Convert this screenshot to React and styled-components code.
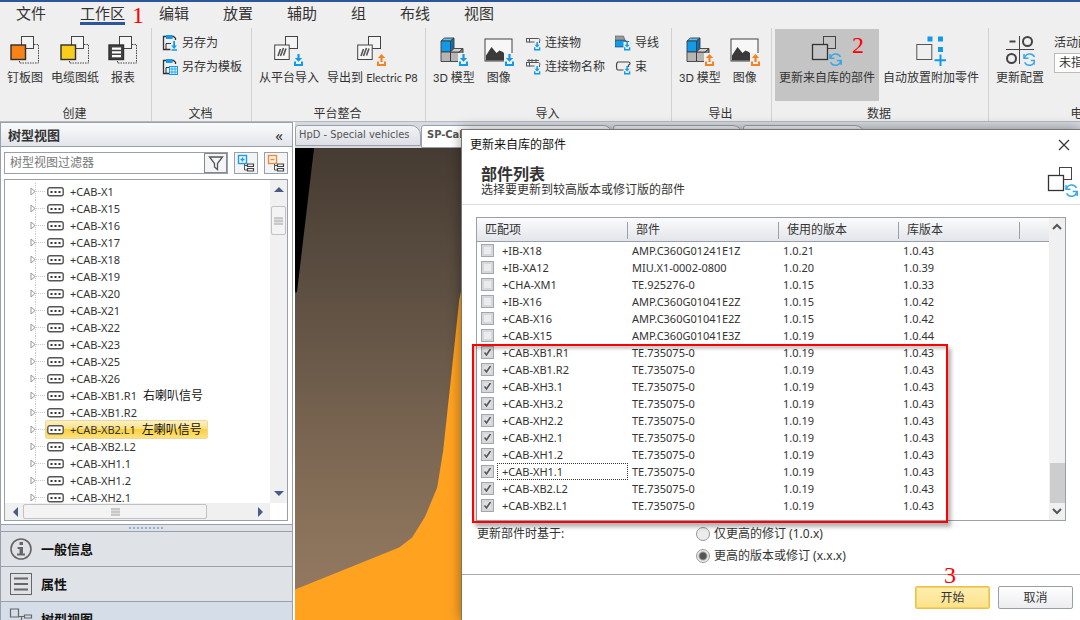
import { useState } from 'react'
import styled, { createGlobalStyle, css } from 'styled-components'

const colors = {
  text: '#333',
  blue: '#2b579a',
  sky: '#0f9bea',
  orange: '#f58220',
  line: '#9aa0ab',
  red: '#f00'
}

const treeItems = [
  ['+CAB-X1'], ['+CAB-X15'], ['+CAB-X16'], ['+CAB-X17'], ['+CAB-X18'], ['+CAB-X19'], ['+CAB-X20'],
  ['+CAB-X21'], ['+CAB-X22'], ['+CAB-X23'], ['+CAB-X25'], ['+CAB-X26'], ['+CAB-XB1.R1', '右喇叭信号'],
  ['+CAB-XB1.R2'], ['+CAB-XB2.L1', '左喇叭信号'], ['+CAB-XB2.L2'], ['+CAB-XH1.1'], ['+CAB-XH1.2'], ['+CAB-XH2.1']
]

const parts = [
  ['+IB-X18', 'AMP.C360G01241E1Z', '1.0.21', '1.0.43', false],
  ['+IB-XA12', 'MIU.X1-0002-0800', '1.0.20', '1.0.39', false],
  ['+CHA-XM1', 'TE.925276-0', '1.0.15', '1.0.33', false],
  ['+IB-X16', 'AMP.C360G01041E2Z', '1.0.15', '1.0.42', false],
  ['+CAB-X16', 'AMP.C360G01041E2Z', '1.0.15', '1.0.42', false],
  ['+CAB-X15', 'AMP.C360G01041E3Z', '1.0.19', '1.0.44', false],
  ['+CAB-XB1.R1', 'TE.735075-0', '1.0.19', '1.0.43', true],
  ['+CAB-XB1.R2', 'TE.735075-0', '1.0.19', '1.0.43', true],
  ['+CAB-XH3.1', 'TE.735075-0', '1.0.19', '1.0.43', true],
  ['+CAB-XH3.2', 'TE.735075-0', '1.0.19', '1.0.43', true],
  ['+CAB-XH2.2', 'TE.735075-0', '1.0.19', '1.0.43', true],
  ['+CAB-XH2.1', 'TE.735075-0', '1.0.19', '1.0.43', true],
  ['+CAB-XH1.2', 'TE.735075-0', '1.0.19', '1.0.43', true],
  ['+CAB-XH1.1', 'TE.735075-0', '1.0.19', '1.0.43', true],
  ['+CAB-XB2.L2', 'TE.735075-0', '1.0.19', '1.0.43', true],
  ['+CAB-XB2.L1', 'TE.735075-0', '1.0.19', '1.0.43', true]
]

/* ---------- icons ---------- */

const ArrowDown = ({ x = 0, y = 0, s = 1 }) => (
  <g transform={`translate(${x} ${y}) scale(${s})`} fill={colors.sky}>
    <path d='M3.4 0h2.2v4h2.6L4.5 7.8.8 4h2.600z' />
    <path d='M0 7.600h2v2.400h5V7.600h2V12H0z' />
  </g>
)

const ArrowUp = ({ x = 0, y = 0 }) => (
  <g transform={`translate(${x} ${y})`} fill={colors.orange}>
    <path d='M3.400 8h2.200V4h2.600L4.500 0 .8 4h2.600z' />
    <path d='M0 7.600h2v2.400h5V7.600h2V12H0z' />
  </g>
)

const Refresh = ({ x = 0, y = 0 }) => (
  <g transform={`translate(${x} ${y})`} fill='none' stroke='#35a7e6' strokeWidth='1.5'>
    <path d='M1.5 5.2A5.3 5.3 0 0 1 11.500 4' />
    <path d='M11.8 7.4A5.3 5.3 0 0 1 1.7 9.2' />
    <path d='M1 1v4.3h4.5' />
    <path d='M12.2 12V7.6H7.8' />
  </g>
)

const BoardIcon = ({ fill, lines }) => (
  <svg width='30' height='32' viewBox='0 0 30 32'>
    <rect x='11.5' y='1.5' width='12' height='12' fill='#f4f4f4' stroke='#444' />
    <path d='M24 9.5h4.5v18.5H9.5V25' fill='none' stroke='#444' strokeDasharray='1.5 1' />
    <rect x='1' y='10' width='14.5' height='14.5' fill={fill} stroke='#2e2e2e' strokeWidth='1.4' />
    {lines && <path d='M4 12.5h9v2.2H4zM4 16.2h9v2.2H4zM4 20h9v2.2H4z' fill='#fff' />}
  </svg>
)

const PlatformIcon = ({ up }) => (
  <svg width='30' height='32' viewBox='0 0 30 32'>
    <rect x='11.5' y='1.5' width='12' height='12' fill='#f4f4f4' stroke='#444' />
    <rect x='.7' y='10' width='14.5' height='14.5' fill='#f7f7f7' stroke='#444' />
    <path d='M4 21l2.5-7M6.5 21l3-8M9.5 20.5l2.5-7' stroke='#555' strokeWidth='1.6' />
    {up ? <ArrowUp x={20} y={19} /> : <ArrowDown x={20} y={19} />}
  </svg>
)

const CubesIcon = ({ up }) => (
  <svg width='30' height='32' viewBox='0 0 30 32' stroke='#3c3c3c' strokeWidth='.9'>
    <path d='M2 6l3.5-3H15l-3.5 3z' fill='#5fc0f3' />
    <path d='M2 6h9.5v11H2z' fill='#0f9bea' />
    <path d='M11.5 6L15 3v11l-3.500 3z' fill='#0a6fb0' />
    <path d='M2 17h9.5v9.5H2zM11.5 17H20v9.5h-8.500z' fill='#b5b5b5' />
    <path d='M11.5 17l3.5-3.5h9L20 17z' fill='#d0d0d0' />
    <path d='M20 17l4-3.5v9.5l-4 3.500z' fill='#808080' />
    <rect x='19' y='18' width='11' height='14' fill='#efefef' stroke='none' />
    <g stroke='none'>{up ? <ArrowUp x={20} y={19} /> : <ArrowDown x={20} y={19} />}</g>
  </svg>
)

const ImageIcon = ({ up }) => (
  <svg width='30' height='32' viewBox='0 0 30 32'>
    <rect x='1' y='4' width='27' height='22' fill='#f7f7f7' stroke='#444' />
    <path d='M2 25.5v-5L7.5 12l5 6 3-2.5 3.5 1.5 3 4 5 1v3.500z' fill='#3a3a3a' />
    <path d='M20 18h10v14H20z' fill='#efefef' />
    {up ? <ArrowUp x={21} y={19} /> : <ArrowDown x={21} y={19} />}
  </svg>
)

const UpdateIcon = ({ plain }) => (
  <svg width='32' height='32' viewBox='0 0 32 32'>
    <rect x='12.5' y='1.5' width='12' height='12' fill={plain ? '#fff' : 'none'} stroke='#444' />
    <rect x='1.5' y='9.5' width='15' height='15' fill={plain ? '#fff' : '#c4c4c4'} stroke='#333' strokeWidth='1.300' />
    <Refresh x={18} y={18} />
  </svg>
)

const PlaceIcon = () => (
  <svg width='30' height='32' viewBox='0 0 30 32'>
    <rect x='.8' y='9.5' width='15' height='15' fill='none' stroke='#555' />
    <path d='M11.5 1.5h5v5h-5zM22 1.5h5v5h-5zM22 12h5v5h-5z' fill={colors.sky} />
    <path d='M24.5 19.5V31M18.5 25.2h12' stroke={colors.sky} strokeWidth='2' />
  </svg>
)

const ConfigIcon = () => (
  <svg width='30' height='32' viewBox='0 0 30 32' fill='none' stroke='#444'>
    <path d='M14.5 1v28M1 14.5h28' />
    <path d='M4.5 6.5h6' strokeWidth='2' />
    <circle cx='22.5' cy='6.5' r='4.5' strokeWidth='2' />
    <circle cx='6.5' cy='23.5' r='4.5' strokeWidth='2' />
    <Refresh x={18} y={18} />
  </svg>
)

const SaveIcon = ({ template }) => (
  <svg width='16' height='16' viewBox='0 0 16 16'>
    <path d='M13.5 5V3.2L11.5 1.5H1.500v13h7' fill='none' stroke='#333' strokeWidth='1.3' />
    <path d='M4 0h6.5v4H4z' fill={colors.sky} />
    <path d='M4 14V8.5h5' fill='none' stroke='#333' />
    {template ? (
      <g>
        <rect x='7.5' y='7.5' width='8' height='8' fill='#e8f6fd' stroke={colors.sky} />
        <path d='M10 8v7M13 8v7M8 10h7M8 13h7' stroke={colors.sky} strokeWidth='.8' />
      </g>
    ) : <path d='M11.200 6h1.800v4.500h2L12.100 14 9.200 10.500h2zM9.500 14.200H15v1.500H9.500z' fill={colors.sky} />}
  </svg>
)

const LinkIcon = ({ name }) => (
  <svg width='15' height='16' viewBox='0 0 15 16'>
    <path d='M3 3.5h9.5a1.5 1.5 0 0 1 1 2.500V8M3 7h5.5' fill='none' stroke='#555' />
    <rect x='.5' y='3.5' width='3' height='3.5' fill='none' stroke='#555' />
    {name && <path d='M1 1.5h12M3 0v3M6 0v3M10 0v3' stroke='#555' />}
    <ArrowDown x={8} y={7} s={0.7} />
  </svg>
)

const WireIcon = () => (
  <svg width='16' height='16' viewBox='0 0 16 16'>
    <path d='M0 1h8.500l1.500 4H0z' fill='#999' stroke='#555' strokeWidth='.6' />
    <path d='M0 5.5h11V12H0z' fill={colors.sky} stroke='#235' strokeWidth='.6' />
    <path d='M11 6.5c3-.5 4 .5 4 2' fill='none' stroke='#555' />
    <path d='M8.5 7h7v9h-7z' fill='#efefef' />
    <ArrowDown x={9} y={7} s={0.7} />
  </svg>
)

const BundleIcon = () => (
  <svg width='16' height='16' viewBox='0 0 16 16'>
    <path d='M3 3h10.5a1.5 1.5 0 0 1 0 3v5H3c-2 0-2-8 0-8z' fill='none' stroke='#444' strokeWidth='1.2' />
    <path d='M8.500 8h7v8h-7z' fill='#efefef' />
    <ArrowDown x={9} y={7} s={0.7} />
  </svg>
)

const PlugIcon = () => (
  <svg width='17' height='10' viewBox='0 0 17 10'>
    <rect x='.8' y='.8' width='15.4' height='8' rx='2' fill='#fff' stroke='#555' strokeWidth='1.4' />
    <path d='M3.5 4h2v2h-2zM7.5 4h2v2h-2zM11.5 4h2v2h-2z' fill='#333' />
  </svg>
)

const TwistIcon = () => (
  <svg width='15' height='17' viewBox='0 0 15 17' fill='none'>
    <path d='M5.5 0v17M6 8.5h9' stroke='#c8c8c8' strokeDasharray='1 1' />
    <path d='M1 5l4 3.5L1 12z' fill='#fff' stroke='#999' />
  </svg>
)

const FunnelIcon = () => (
  <svg width='16' height='16' viewBox='0 0 16 16'>
    <path d='M1.5 2h13L9.500 8.500v6L6.500 12v-3.500z' fill='none' stroke='#555' strokeWidth='1.3' />
  </svg>
)

const ExpandIcon = ({ minus }) => {
  const tone = minus ? '#f58a32' : '#1b9fe3'
  return (
    <svg width='18' height='18' viewBox='0 0 18 18' fill='none'>
      <rect x='1.5' y='1.5' width='8' height='8' stroke={tone} strokeWidth='1.4' />
      <path d={minus ? 'M3.500 5.500h4' : 'M3.500 5.500h4M5.500 3.500v4'} stroke={tone} strokeWidth='1.4' />
      <path d='M7.5 10v6H10M7.500 11.500H10' stroke='#555' />
      <path d='M10.500 10h6v2.500h-6zM10.500 14.500h6V17h-6z' stroke='#444' strokeWidth='1.2' />
    </svg>
  )
}

const InfoIcon = () => (
  <svg width='24' height='24' viewBox='0 0 24 24'>
    <circle cx='12' cy='12' r='10' fill='none' stroke='#666' strokeWidth='1.6' />
    <path d='M10.5 5h3.500v3h-3.500zM8.500 10h5.500v6.500h2v2H8v-2h2.500V12h-2z' fill='#666' />
  </svg>
)

const ListIcon = () => (
  <svg width='24' height='24' viewBox='0 0 24 24' fill='none' stroke='#666'>
    <rect x='1.5' y='1.5' width='21' height='21' />
    <path d='M5 6.5h14M5 12h14M5 17.5h14' strokeWidth='2' />
  </svg>
)

const StructureIcon = () => (
  <svg width='24' height='24' viewBox='0 0 24 24' fill='none' stroke='#666' strokeWidth='1.2'>
    <path d='M1.5 2h8v8h-8zM15.5 8h7v3h-7zM15.5 15h7v3h-7zM10 9.5h5.5M12.5 9.5v7h3' />
  </svg>
)

const Chevron = ({ d, color = '#4a5a88', fill = true }) => (
  <svg width='10' height='10' viewBox='0 0 10 10'>
    <path d={d} fill={fill ? color : 'none'} stroke={fill ? 'none' : color} strokeWidth='2' />
  </svg>
)

/* ---------- parts ---------- */

const BigTool = ({ icon, label, active, children }) => (
  <ToolButton $active={active}>
    {icon}
    <span>{label}</span>
    {children}
  </ToolButton>
)

const SmallTool = ({ icon, label }) => <SmallButton>{icon}{label}</SmallButton>

const Ribbon = () => (
  <Header>
    <Menu>
      <MenuTab href='#file'>文件</MenuTab>
      <MenuTab href='#workspace' $active>工作区<Mark $left='52px' $top='1px'>1</Mark></MenuTab>
      <MenuTab href='#edit'>编辑</MenuTab>
      <MenuTab href='#place'>放置</MenuTab>
      <MenuTab href='#assist'>辅助</MenuTab>
      <MenuTab href='#group'>组</MenuTab>
      <MenuTab href='#routing'>布线</MenuTab>
      <MenuTab href='#view'>视图</MenuTab>
    </Menu>
    <Groups>
      <Group $width='152px'>
        <Tools>
          <BigTool icon={<BoardIcon fill='#f98316' />} label='钉板图' />
          <BigTool icon={<BoardIcon fill='#f8cd1c' />} label='电缆图纸' />
          <BigTool icon={<BoardIcon fill='#444' lines />} label='报表' />
        </Tools>
        <GroupTitle>创建</GroupTitle>
      </Group>
      <Group $width='100px'>
        <Tools>
          <SmallTools>
            <SmallTool icon={<SaveIcon />} label='另存为' />
            <SmallTool icon={<SaveIcon template />} label='另存为模板' />
          </SmallTools>
        </Tools>
        <GroupTitle>文档</GroupTitle>
      </Group>
      <Group $width='174px'>
        <Tools>
          <BigTool icon={<PlatformIcon />} label='从平台导入' />
          <BigTool icon={<PlatformIcon up />} label={<>导出到 <Latin>Electric P8</Latin></>} />
        </Tools>
        <GroupTitle>平台整合</GroupTitle>
      </Group>
      <Group $width='246px'>
        <Tools>
          <BigTool icon={<CubesIcon />} label={<><Latin>3D</Latin> 模型</>} />
          <BigTool icon={<ImageIcon />} label='图像' />
          <SmallTools>
            <SmallTool icon={<LinkIcon />} label='连接物' />
            <SmallTool icon={<LinkIcon name />} label='连接物名称' />
          </SmallTools>
          <SmallTools>
            <SmallTool icon={<WireIcon />} label='导线' />
            <SmallTool icon={<BundleIcon />} label='束' />
          </SmallTools>
        </Tools>
        <GroupTitle>导入</GroupTitle>
      </Group>
      <Group $width='100px'>
        <Tools>
          <BigTool icon={<CubesIcon up />} label={<><Latin>3D</Latin> 模型</>} />
          <BigTool icon={<ImageIcon up />} label='图像' />
        </Tools>
        <GroupTitle>导出</GroupTitle>
      </Group>
      <Group $width='217px'>
        <Tools>
          <BigTool icon={<UpdateIcon />} label='更新来自库的部件' active>
            <Mark $left='77px' $top='4px'>2</Mark>
          </BigTool>
          <BigTool icon={<PlaceIcon />} label='自动放置附加零件' />
        </Tools>
        <GroupTitle>数据</GroupTitle>
      </Group>
      <Group $width='190px'>
        <Tools>
          <BigTool icon={<ConfigIcon />} label='更新配置' />
          <Field>
            <label htmlFor='config'>活动配置</label>
            <ConfigSelect id='config'>
              <option>未指定</option>
            </ConfigSelect>
          </Field>
        </Tools>
        <GroupTitle>电气</GroupTitle>
      </Group>
    </Groups>
  </Header>
)

const Sidebar = () => {
  const [selected, setSelected] = useState(14)
  return (
    <Side>
      <SideTitle><h2>树型视图</h2><Collapse aria-label='collapse'>«</Collapse></SideTitle>
      <FilterRow>
        <FilterBox>
          <FilterInput aria-label='filter' placeholder='树型视图过滤器' />
          <FunnelButton aria-label='apply filter'><FunnelIcon /></FunnelButton>
        </FilterBox>
        <IconButton aria-label='expand all'><ExpandIcon /></IconButton>
        <IconButton aria-label='collapse all'><ExpandIcon minus /></IconButton>
      </FilterRow>
      <TreeBox>
        <TreeMain>
          <Tree>
            {treeItems.map(([name, note], i) => (
              <TreeRow key={name}>
                <TwistIcon />
                <TreeLabel $selected={i === selected} onClick={() => setSelected(i)}>
                  <PlugIcon />{name}{note && <Note>{note}</Note>}
                </TreeLabel>
              </TreeRow>
            ))}
          </Tree>
          <TreeScroll>
            <Chevron d='M0 8l5-5 5 5z' />
            <TreeThumb><Grip /></TreeThumb>
            <Chevron d='M0 2l5 5 5-5z' />
          </TreeScroll>
        </TreeMain>
        <TreeScrollX>
          <Chevron d='M8 0L3 5l5 5z' />
          <ThumbTrack><ThumbX><Grip /></ThumbX></ThumbTrack>
          <Chevron d='M2 0l5 5-5 5z' />
        </TreeScrollX>
      </TreeBox>
      <Splitter><Dots /></Splitter>
      <PanelButton><InfoIcon />一般信息</PanelButton>
      <PanelButton><ListIcon />属性</PanelButton>
      <PanelButton $current><StructureIcon />树型视图</PanelButton>
    </Side>
  )
}

const Workspace = () => (
  <Work>
    <Tabs>
      <DocTab $width='126px'>HpD - Special vehicles</DocTab>
      <DocTab $width='192px' $active>SP-Cabin</DocTab>
      <DocTab $width='130px' aria-label='document 3' />
      <DocTab $width='122px' aria-label='document 4' />
    </Tabs>
    <Scene viewBox='0 0 784 472' preserveAspectRatio='xMinYMin slice'>
      <defs>
        <linearGradient id='shade' x1='0' y1='0' x2='0' y2='1'>
          <stop offset='0' stopColor='#463b32' />
          <stop offset='.3' stopColor='#5d4f42' />
          <stop offset='.8' stopColor='#8a725a' />
          <stop offset='1' stopColor='#967b62' />
        </linearGradient>
      </defs>
      <rect width='784' height='472' fill='url(#shade)' />
      <path d='M0 0h19L2 144H0z' fill='#000' />
      <path d='M166 142l-2 10-6 57-10 93-6 37-12 29-13 21-13 10L0 441v31h784V142z' fill='#ffa220' />
    </Scene>
  </Work>
)

const UpdateDialog = () => {
  const [checked, setChecked] = useState(parts.map(part => part[4]))
  const [basis, setBasis] = useState('version')
  const toggle = i => setChecked(checked.map((value, n) => (n === i ? !value : value)))
  return (
    <Dialog role='dialog' aria-label='更新来自库的部件'>
      <TitleBar>
        更新来自库的部件
        <Close aria-label='close'>
          <svg width='12' height='12' viewBox='0 0 12 12'><path d='M1 1l10 10M11 1L1 11' stroke='#333' strokeWidth='1.2' /></svg>
        </Close>
      </TitleBar>
      <Intro>
        <div>
          <h1>部件列表</h1>
          <p>选择要更新到较高版本或修订版的部件</p>
        </div>
        <UpdateIcon plain />
      </Intro>
      <ListBox>
        <Table>
          <colgroup>
            <Col $width='151px' /><Col $width='151px' /><Col $width='120px' /><Col $width='121px' /><col />
          </colgroup>
          <thead>
            <tr><Th>匹配项</Th><Th>部件</Th><Th>使用的版本</Th><Th>库版本</Th><Th /></tr>
          </thead>
          <tbody>
            {parts.map(([name, part, used, library], i) => (
              <tr key={name}>
                <Td>
                  <PartLabel>
                    <Check type='checkbox' checked={checked[i]} onChange={() => toggle(i)} />
                    <PartName $focused={i === 13}>{name}</PartName>
                  </PartLabel>
                </Td>
                <Td>{part}</Td>
                <Td>{used}</Td>
                <Td>{library}</Td>
                <Td />
              </tr>
            ))}
          </tbody>
        </Table>
        <ListScroll>
          <Chevron d='M1 7l4-4 4 4' color='#555' fill={false} />
          <ListThumb />
          <Chevron d='M1 3l4 4 4-4' color='#555' fill={false} />
        </ListScroll>
        <Highlight />
      </ListBox>
      <Options>
        <span>更新部件时基于:</span>
        <Choices>
          <Choice>
            <Radio type='radio' name='basis' checked={basis === 'revision'} onChange={() => setBasis('revision')} />
            仅更高的修订 (1.0.x)
          </Choice>
          <Choice>
            <Radio type='radio' name='basis' checked={basis === 'version'} onChange={() => setBasis('version')} />
            更高的版本或修订 (x.x.x)
          </Choice>
        </Choices>
      </Options>
      <Footer>
        <Action $primary>开始<Mark $left='28px' $top='-24px'>3</Mark></Action>
        <Action>取消</Action>
      </Footer>
    </Dialog>
  )
}

const App = () => (
  <Page>
    <GlobalStyle />
    <Ribbon />
    <Body>
      <Sidebar />
      <Workspace />
      <UpdateDialog />
    </Body>
  </Page>
)

/* ---------- styles ---------- */

const GlobalStyle = createGlobalStyle`
* { box-sizing: border-box; }
body {
  margin: 0;
  overflow: hidden;
  color: ${colors.text};
  font: 12px/16px "Noto Sans", "Noto Sans CJK SC", sans-serif;
}
h1, h2, p, ul { margin: 0; padding: 0; }
button, input, select { font: inherit; color: inherit; }
button { cursor: pointer; }
svg { display: block; flex: none; }
`

const headerShade = css`
background: linear-gradient(#fbfbfc, #e2e5ea);
`

const Page = styled.div`
display: flex;
flex-direction: column;
height: 100vh;
background: #efefef;
`

const Header = styled.header`
border-top: 2px solid ${colors.blue};
border-bottom: 1px solid #b5b9c2;
background: #efefef;
overflow: hidden;
`

const Menu = styled.nav`
display: flex;
gap: 34px;
padding: 0 16px;
height: 26px;
`

const MenuTab = styled.a`
position: relative;
height: 23px;
font-size: 15px;
line-height: 23px;
color: ${colors.text};
text-decoration: none;
border-bottom: ${({ $active }) => ($active ? `3px solid ${colors.blue}` : 'none')};
`

const Mark = styled.span`
position: absolute;
left: ${({ $left }) => $left};
top: ${({ $top }) => $top};
font: 24px/24px "Liberation Serif", serif;
color: ${colors.red};
`

const Latin = styled.span`
font-family: Lato, sans-serif;
font-size: 11px;
`

const Groups = styled.div`
display: flex;
height: 93px;
`

const Group = styled.section`
display: flex;
flex-direction: column;
justify-content: space-between;
flex: none;
width: ${({ $width }) => $width};
padding: 1px 0 0 3px;
border-right: 1px solid #d2d2d2;
`

const Tools = styled.div`
display: flex;
`

const ToolButton = styled.button`
position: relative;
display: flex;
flex-direction: column;
align-items: center;
gap: 3px;
min-width: 40px;
height: 72px;
padding: 6px 4px 0;
border: 0;
white-space: nowrap;
background: ${({ $active }) => ($active ? '#c4c4c4' : 'transparent')};
`

const SmallTools = styled.div`
display: flex;
flex-direction: column;
padding: 2px 3px 0 7px;
`

const SmallButton = styled.button`
display: flex;
align-items: center;
gap: 4px;
height: 24px;
padding: 0;
border: 0;
white-space: nowrap;
background: transparent;
`

const GroupTitle = styled.div`
padding-right: 5px;
line-height: 14px;
text-align: center;
`

const Field = styled.div`
display: flex;
flex-direction: column;
gap: 2px;
padding: 6px 0 0 6px;
`

const ConfigSelect = styled.select`
appearance: none;
width: 100px;
height: 20px;
padding: 0 4px;
border: 1px solid #bbb;
background: #fff;
`

const Body = styled.main`
position: relative;
display: flex;
flex: 1;
min-height: 0;
`

const Side = styled.aside`
display: flex;
flex-direction: column;
flex: none;
width: 293px;
border: 1px solid ${colors.line};
border-bottom: 0;
background: #fff;
overflow: hidden;
`

const SideTitle = styled.div`
display: flex;
align-items: center;
justify-content: space-between;
flex: none;
height: 24px;
padding: 0 9px 0 7px;
border-bottom: 1px solid ${colors.line};
${headerShade}
h2 {
  font-size: 13px;
}
`

const Collapse = styled.button`
padding: 0;
border: 0;
font-size: 15px;
background: transparent;
`

const FilterRow = styled.div`
display: flex;
gap: 6px;
flex: none;
padding: 5px 4px 4px 3px;
`

const FilterBox = styled.div`
display: flex;
flex: 1;
min-width: 0;
height: 22px;
border: 1px solid ${colors.line};
`

const FilterInput = styled.input`
flex: 1;
min-width: 0;
padding: 0 5px;
border: 0;
outline: 0;
&::placeholder {
  color: #777;
}
`

const FunnelButton = styled.button`
display: grid;
place-items: center;
width: 23px;
padding: 0;
border: 1px solid #888;
background: #f3f4f6;
`

const IconButton = styled.button`
display: grid;
place-items: center;
width: 24px;
height: 22px;
padding: 0;
border: 1px solid ${colors.line};
background: #f3f4f6;
`

const TreeBox = styled.div`
display: flex;
flex-direction: column;
flex: none;
height: 342px;
margin: 1px 4px 0 3px;
border: 1px solid ${colors.line};
`

const TreeMain = styled.div`
display: flex;
flex: 1;
min-height: 0;
overflow: hidden;
`

const Tree = styled.ul`
flex: 1;
min-width: 0;
padding: 3px 0 0 25px;
list-style: none;
`

const TreeRow = styled.li`
display: flex;
align-items: center;
height: 17px;
font-size: 11px;
`

const TreeLabel = styled.button`
display: flex;
align-items: center;
gap: 6px;
height: 19px;
padding: 0 5px 0 1px;
border: 1px solid ${({ $selected }) => ($selected ? '#ecd9a0' : 'transparent')};
border-radius: 2px;
white-space: nowrap;
background: ${({ $selected }) => ($selected ? 'linear-gradient(#fdf0bd, #fbe28a 45%, #fccf3a 50%, #fde27c)' : 'transparent')};
`

const Note = styled.span`
font-size: 12px;
color: #111;
`

const TreeScroll = styled.div`
display: flex;
flex-direction: column;
align-items: center;
width: 17px;
padding: 4px 0;
background: #f0f0f1;
svg:last-child {
  margin-top: auto;
}
`

const TreeThumb = styled.div`
display: grid;
place-items: center;
width: 15px;
height: 29px;
margin-top: 12px;
border: 1px solid #bfc1c6;
border-radius: 2px;
background: #f3f3f4;
`

const Grip = styled.span`
width: 9px;
height: 8px;
background: repeating-linear-gradient(#c8c8c8 0 2px, #ddd 2px 3px);
`

const TreeScrollX = styled.div`
display: flex;
align-items: center;
flex: none;
height: 17px;
margin-right: 17px;
padding: 0 4px 0 5px;
background: #f0f0f1;
`

const ThumbTrack = styled.div`
flex: 1;
padding: 0 3px;
`

const ThumbX = styled.div`
display: grid;
place-items: center;
width: 80%;
height: 15px;
border: 1px solid #bfc1c6;
border-radius: 2px;
background: #f3f3f4;
`

const Splitter = styled.div`
display: grid;
place-items: center;
flex: none;
height: 8px;
margin-top: 3px;
border-top: 1px solid ${colors.line};
border-bottom: 1px solid ${colors.line};
background: #dfe3e8;
`

const Dots = styled.span`
width: 36px;
height: 2px;
background: repeating-linear-gradient(90deg, #8db2dc 0 2px, transparent 2px 4px);
`

const PanelButton = styled.button`
display: flex;
align-items: center;
gap: 8px;
flex: none;
height: 35px;
padding: 0 8px;
border: 0;
border-bottom: 1px solid ${colors.line};
font-size: 13px;
font-weight: bold;
color: #111;
background: ${({ $current }) => ($current ? '#d5dde8' : '#dfe2e7')};
`

const Work = styled.section`
display: flex;
flex-direction: column;
flex: 1;
min-width: 0;
padding-left: 2px;
background: #fff;
`

const Tabs = styled.div`
display: flex;
flex: none;
height: 26px;
padding-top: 3px;
background: #d6dae0;
`

const DocTab = styled.button`
flex: none;
width: ${({ $width }) => $width};
height: ${({ $active }) => ($active ? '23px' : '21px')};
padding: ${({ $active }) => ($active ? '0 5px 4px' : '0 3px 2px')};
border: 1px solid ${colors.line};
border-radius: 3px 10px 0 0;
font: ${({ $active }) => ($active ? 'bold' : 'normal')} 11px/16px "DejaVu Sans Condensed", "DejaVu Sans", sans-serif;
text-align: left;
color: #555;
background: ${({ $active }) => ($active ? '#fff' : 'linear-gradient(#f2f3f5, #dcdfe4)')};
`

const Scene = styled.svg`
flex: 1;
width: 100%;
min-height: 0;
`

const Dialog = styled.div`
position: absolute;
top: 7px;
right: 0;
bottom: 0;
left: 461px;
display: flex;
flex-direction: column;
border-top: 1px solid #777;
border-left: 1px solid #777;
background: #fff;
box-shadow: 0 0 12px rgba(0, 0, 0, 0.4);
`

const TitleBar = styled.div`
display: flex;
align-items: center;
justify-content: space-between;
height: 30px;
padding: 0 10px 0 8px;
color: #111;
`

const Close = styled.button`
padding: 0;
border: 0;
background: transparent;
`

const Intro = styled.div`
display: flex;
justify-content: space-between;
height: 45px;
padding: 6px 1px 0 19px;
border-bottom: 1px solid #ddd;
h1 {
  font-size: 16px;
  line-height: 16px;
}
`

const ListBox = styled.div`
position: relative;
display: flex;
height: 305px;
margin: 12px 14px 0;
border: 1px solid ${colors.line};
`

const Table = styled.table`
flex: 1;
align-self: flex-start;
table-layout: fixed;
border-collapse: collapse;
`

const Col = styled.col`
width: ${({ $width }) => $width};
`

const Th = styled.th`
height: 24px;
padding: 0 8px;
border-bottom: 1px solid ${colors.line};
font-weight: normal;
text-align: left;
background: linear-gradient(90deg, transparent calc(100% - 1px), #9aa0ab 0) 0 4px / 100% 17px no-repeat, linear-gradient(#fbfbfc, #e2e5ea);
&:last-child {
  ${headerShade}
}
`

const Td = styled.td`
height: 17px;
padding: 0 0 0 4px;
font-size: 11px;
line-height: 17px;
`

const PartLabel = styled.label`
display: flex;
align-items: center;
gap: 3px;
height: 17px;
`

const Check = styled.input`
appearance: none;
flex: none;
width: 13px;
height: 13px;
margin: 0;
border: 1px solid #a3a6aa;
background: #ececee;
box-shadow: inset 0 0 0 2px #d5d7da;
&:checked {
  background: #dfe1e4 url("data:image/svg+xml,%3Csvg xmlns='http://www.w3.org/2000/svg' viewBox='0 0 11 11'%3E%3Cpath d='M2.5 5.5l2 2.5 4-6' fill='none' stroke='%23555' stroke-width='1.6'/%3E%3C/svg%3E");
}
`

const PartName = styled.span`
flex: 1;
padding-left: 4px;
border: 1px dotted ${({ $focused }) => ($focused ? '#333' : 'transparent')};
line-height: 15px;
`

const ListScroll = styled.div`
display: flex;
flex-direction: column;
align-items: center;
width: 16px;
padding: 4px 0;
background: #f0f0f0;
`

const ListThumb = styled.div`
width: 15px;
height: 40px;
margin: auto 0 3px;
background: #cdcdcd;
`

const Highlight = styled.div`
position: absolute;
top: 126px;
left: -5px;
width: 476px;
height: 179px;
border: 2px solid ${colors.red};
box-shadow: 3px 4px 4px rgba(0, 0, 0, 0.3), inset 2px 3px 3px rgba(0, 0, 0, 0.2);
pointer-events: none;
`

const Options = styled.div`
display: flex;
padding: 5px 15px 10px;
border-bottom: 1px solid #aaa;
> span {
  width: 219px;
}
`

const Choices = styled.div`
display: flex;
flex-direction: column;
gap: 6px;
`

const Choice = styled.label`
display: flex;
align-items: center;
gap: 4px;
height: 16px;
`

const Radio = styled.input`
appearance: none;
width: 14px;
height: 14px;
margin: 0;
border: 1px solid #999;
border-radius: 50%;
background: #ececec;
&:checked {
  background: radial-gradient(circle, #555 0 3px, #ececec 5px);
}
`

const Footer = styled.div`
display: flex;
justify-content: flex-end;
gap: 8px;
padding: 11px 7px;
`

const Action = styled.button`
position: relative;
width: 75px;
height: 23px;
padding: 0;
border: 1px solid ${({ $primary }) => ($primary ? '#e8c14e' : '#999fa8')};
border-radius: 2px;
background: ${({ $primary }) => ($primary ? 'linear-gradient(#fdeeb0, #fce28a)' : 'linear-gradient(#fff, #ececef)')};
box-shadow: ${({ $primary }) => ($primary ? 'inset 0 0 0 1px #f7d060' : 'none')};
`

export default App
